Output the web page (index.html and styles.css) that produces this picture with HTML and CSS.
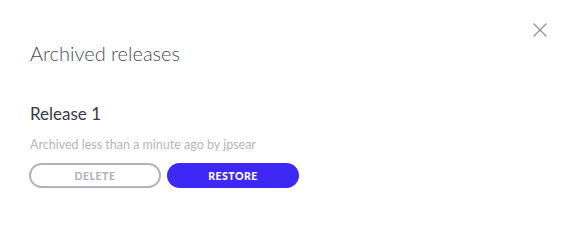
FILE: index.html
```html
<!DOCTYPE html>
<html>
<head>
<meta charset="utf-8">
<link rel="stylesheet" href="styles.css">
</head>
<body>
<div class="modal">
  <button class="close" aria-label="Close">
    <svg width="14" height="14" viewBox="0 0 14 14"><path d="M1 1L13 13M13 1L1 13" stroke="#8f95aa" stroke-width="1.4" stroke-linecap="round"/></svg>
  </button>
  <h1 class="title">Archived releases</h1>
  <div class="release">
    <h2 class="name">Release 1</h2>
    <p class="meta">Archived less than a minute ago by jpsear</p>
    <div class="actions">
      <button class="btn btn-delete">DELETE</button>
      <button class="btn btn-restore">RESTORE</button>
    </div>
  </div>
</div>
</body>
</html>
```
FILE: styles.css
```css
html, body {
  margin: 0;
  padding: 0;
  background: #fff;
}
body {
  font-family: Lato, "Open Sans", sans-serif;
}
.modal {
  position: relative;
  width: 576px;
  height: 232px;
  box-sizing: border-box;
  padding: 39px 30px 0 30px;
}
.close {
  position: absolute;
  top: 23px;
  right: 29px;
  border: 0;
  background: none;
  padding: 0;
  width: 14px;
  height: 14px;
  display: flex;
}
.title {
  margin: 0;
  font-size: 20px;
  font-weight: 300;
  color: #4b4b5c;
  line-height: 28px;
}
.release {
  margin-top: 36px;
}
.name {
  margin: 0;
  font-size: 17px;
  font-weight: 400;
  color: #383848;
  line-height: 22px;
}
.meta {
  margin: 12px 0 0 0;
  font-size: 12.5px;
  color: #b5b5c2;
  line-height: 16px;
}
.actions {
  display: flex;
  gap: 6px;
  margin-top: 10px;
  margin-left: -1px;
}
.btn {
  box-sizing: border-box;
  width: 132px;
  height: 25px;
  border-radius: 13px;
  font-family: Lato, sans-serif;
  font-weight: 900;
  font-size: 10.5px;
  letter-spacing: 0.5px;
  padding: 0;
  display: flex;
  align-items: center;
  justify-content: center;
}
.btn-delete {
  background: #fff;
  border: 2px solid #b3b1c2;
  color: #b3b1c2;
}
.btn-restore {
  background: #3e28f5;
  border: 0;
  color: #fff;
}
```
